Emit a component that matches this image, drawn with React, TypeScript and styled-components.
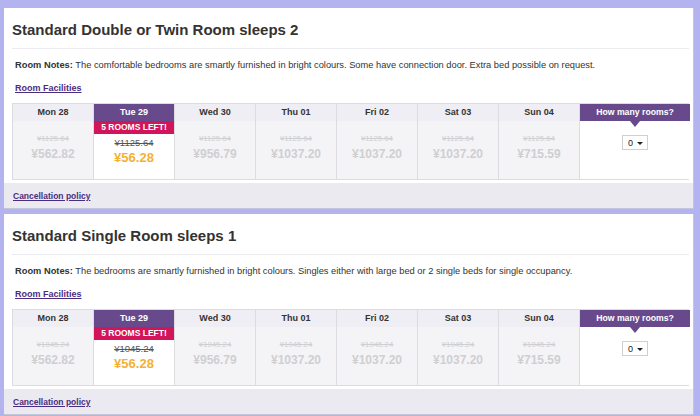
import React from "react";
import styled, { createGlobalStyle } from "styled-components";

const GlobalStyle = createGlobalStyle`
  html, body {
    margin: 0;
    padding: 0;
    background: #b3b3f0;
    font-family: "Liberation Sans", Arial, sans-serif;
    color: #333;
  }
`;

type Day = { label: string; old: string; price: string };

type Room = {
  title: string;
  notes: string;
  days: Day[];
  selected: number;
};

const rooms: Room[] = [
  {
    title: "Standard Double or Twin Room sleeps 2",
    notes:
      "The comfortable bedrooms are smartly furnished in bright colours. Some have connection door. Extra bed possible on request.",
    selected: 1,
    days: [
      { label: "Mon 28", old: "¥1125.64", price: "¥562.82" },
      { label: "Tue 29", old: "¥1125.64", price: "¥56.28" },
      { label: "Wed 30", old: "¥1125.64", price: "¥956.79" },
      { label: "Thu 01", old: "¥1125.64", price: "¥1037.20" },
      { label: "Fri 02", old: "¥1125.64", price: "¥1037.20" },
      { label: "Sat 03", old: "¥1125.64", price: "¥1037.20" },
      { label: "Sun 04", old: "¥1125.64", price: "¥715.59" },
    ],
  },
  {
    title: "Standard Single Room sleeps 1",
    notes:
      "The bedrooms are smartly furnished in bright colours. Singles either with large bed or 2 single beds for single occupancy.",
    selected: 1,
    days: [
      { label: "Mon 28", old: "¥1045.24", price: "¥562.82" },
      { label: "Tue 29", old: "¥1045.24", price: "¥56.28" },
      { label: "Wed 30", old: "¥1045.24", price: "¥956.79" },
      { label: "Thu 01", old: "¥1045.24", price: "¥1037.20" },
      { label: "Fri 02", old: "¥1045.24", price: "¥1037.20" },
      { label: "Sat 03", old: "¥1045.24", price: "¥1037.20" },
      { label: "Sun 04", old: "¥1045.24", price: "¥715.59" },
    ],
  },
];

const Page = styled.div`
  display: flex;
  flex-direction: column;
  gap: 5px;
  padding: 8px 6px 0 4px;
`;

const Card = styled.section`
  background: #fff;
  border: 1px solid #c4c4dc;
  border-left: none;
  border-top: none;
`;

const CardBody = styled.div`
  padding: 0 4px 3px 8px;
`;

const Title = styled.h2`
  margin: 0;
  padding: 11px 0 7px;
  font-size: 15px;
  line-height: 22px;
  font-weight: bold;
  color: #333;
  border-bottom: 1px solid #ececf0;
`;

const Notes = styled.p`
  margin: 9px 0 0;
  padding-left: 3px;
  font-size: 9.3px;
  line-height: 14px;
  color: #333;
`;

const Link = styled.a<{ $size?: number }>`
  color: #4b2d7f;
  font-size: ${(p) => p.$size ?? 9}px;
  font-weight: bold;
  text-decoration: underline;
  cursor: pointer;
`;

const FacilitiesRow = styled.div`
  margin: 7px 0 8px;
  padding-left: 3px;
  line-height: 14px;
`;

const Grid = styled.div`
  display: grid;
  grid-template-columns: repeat(7, 81px) 110px;
  border: 1px solid #dcdce0;
  height: 75px;
`;

const DayCell = styled.div<{ $selected?: boolean }>`
  display: flex;
  flex-direction: column;
  align-items: center;
  border-right: 1px solid #dcdce0;
  background: ${(p) => (p.$selected ? "#fff" : "#f4f4f6")};
`;

const DayHead = styled.div<{ $selected?: boolean }>`
  align-self: stretch;
  height: 17px;
  line-height: 17px;
  text-align: center;
  font-size: 9px;
  font-weight: bold;
  color: ${(p) => (p.$selected ? "#fff" : "#333")};
  background: ${(p) => (p.$selected ? "#684a8c" : "#efeef4")};
`;

const Banner = styled.div`
  align-self: stretch;
  height: 13px;
  line-height: 13px;
  text-align: center;
  font-size: 8.5px;
  font-weight: bold;
  color: #fff;
  background: #d2145a;
  margin-bottom: 3px;
`;

const OldPrice = styled.div<{ $selected?: boolean }>`
  margin-top: ${(p) => (p.$selected ? "0" : "12px")};
  font-size: ${(p) => (p.$selected ? "9.5px" : "7.8px")};
  line-height: 12px;
  text-decoration: line-through;
  color: ${(p) => (p.$selected ? "#555" : "#cfcfd2")};
`;

const Price = styled.div<{ $selected?: boolean }>`
  font-size: ${(p) => (p.$selected ? "13px" : "12px")};
  line-height: 18px;
  font-weight: bold;
  color: ${(p) => (p.$selected ? "#f4b133" : "#cfcfd2")};
`;

const RoomsCell = styled.div`
  display: flex;
  flex-direction: column;
  align-items: center;
  background: #fff;
`;

const RoomsHead = styled.div`
  position: relative;
  align-self: stretch;
  height: 17px;
  line-height: 17px;
  text-align: center;
  font-size: 8.7px;
  font-weight: bold;
  color: #fff;
  background: #684a8c;
  &::after {
    content: "";
    position: absolute;
    left: 50%;
    bottom: -6px;
    margin-left: -5px;
    border-left: 5px solid transparent;
    border-right: 5px solid transparent;
    border-top: 6px solid #684a8c;
  }
`;

const Select = styled.div`
  display: flex;
  align-items: center;
  gap: 4px;
  margin-top: 14px;
  height: 13px;
  padding: 0 4px 0 5px;
  border: 1px solid #cfcfd4;
  font-size: 9px;
  color: #222;
  background: #fff;
  &::after {
    content: "";
    border-left: 3px solid transparent;
    border-right: 3px solid transparent;
    border-top: 3px solid #222;
    margin-top: 2px;
  }
`;

const Footer = styled.div`
  height: 25px;
  display: flex;
  align-items: center;
  padding-left: 9px;
  background: #ebeaf0;
`;

function RoomCard({ room }: { room: Room }) {
  return (
    <Card>
      <CardBody>
        <Title>{room.title}</Title>
        <Notes>
          <b>Room Notes:</b> {room.notes}
        </Notes>
        <FacilitiesRow>
          <Link>Room Facilities</Link>
        </FacilitiesRow>
        <Grid>
          {room.days.map((d, i) => {
            const sel = i === room.selected;
            return (
              <DayCell key={d.label} $selected={sel}>
                <DayHead $selected={sel}>{d.label}</DayHead>
                {sel && <Banner>5 ROOMS LEFT!</Banner>}
                <OldPrice $selected={sel}>{d.old}</OldPrice>
                <Price $selected={sel}>{d.price}</Price>
              </DayCell>
            );
          })}
          <RoomsCell>
            <RoomsHead>How many rooms?</RoomsHead>
            <Select>0</Select>
          </RoomsCell>
        </Grid>
      </CardBody>
      <Footer>
        <Link $size={8.5}>Cancellation policy</Link>
      </Footer>
    </Card>
  );
}

export default function App() {
  return (
    <>
      <GlobalStyle />
      <Page>
        {rooms.map((r) => (
          <RoomCard key={r.title} room={r} />
        ))}
      </Page>
    </>
  );
}
